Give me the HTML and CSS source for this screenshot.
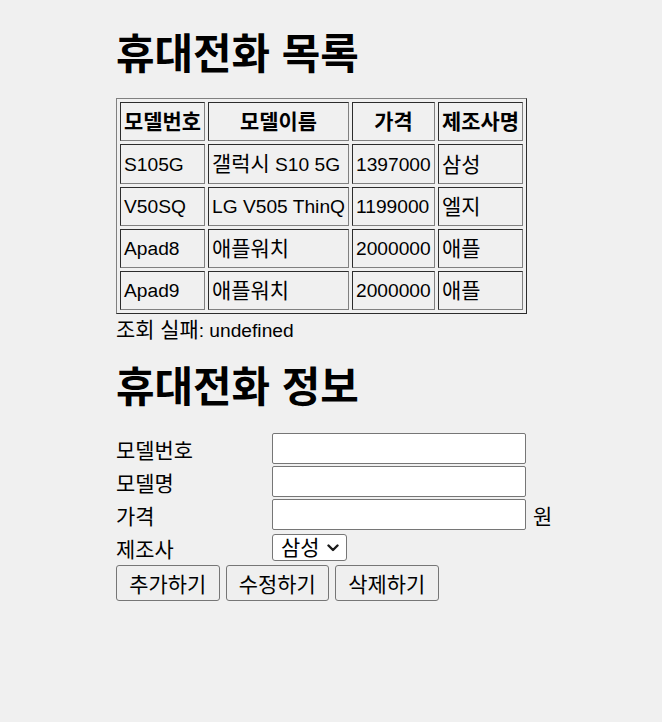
FILE: index.html
```html
<!DOCTYPE html>
<html lang="ko">
<head>
<meta charset="utf-8">
<title>휴대전화</title>
<link rel="stylesheet" href="styles.css">
</head>
<body>
<div class="page">
  <h1 class="title title-list">휴대전화 목록</h1>
  <table class="list">
    <thead>
      <tr>
        <th class="c1">모델번호</th>
        <th class="c2">모델이름</th>
        <th class="c3">가격</th>
        <th class="c4">제조사명</th>
      </tr>
    </thead>
    <tbody>
      <tr><td>S105G</td><td><span class="ko">갤럭시</span> S10 5G</td><td>1397000</td><td class="ko">삼성</td></tr>
      <tr><td>V50SQ</td><td>LG V505 ThinQ</td><td>1199000</td><td class="ko">엘지</td></tr>
      <tr><td>Apad8</td><td class="ko">애플워치</td><td>2000000</td><td class="ko">애플</td></tr>
      <tr><td>Apad9</td><td class="ko">애플워치</td><td>2000000</td><td class="ko">애플</td></tr>
    </tbody>
  </table>
  <div class="msg"><span class="ko">조회 실패</span>: undefined</div>
  <h1 class="title title-info">휴대전화 정보</h1>
  <form class="form">
    <div class="row"><label class="lbl">모델번호</label><input class="field" type="text"></div>
    <div class="row"><label class="lbl">모델명</label><input class="field" type="text"></div>
    <div class="row"><label class="lbl">가격</label><input class="field" type="text"><span class="unit">원</span></div>
    <div class="row row-select">
      <label class="lbl">제조사</label>
      <span class="sel-wrap">
        <select class="sel">
          <option>삼성</option>
          <option>엘지</option>
          <option>애플</option>
        </select>
        <svg class="chev" width="12" height="8" viewBox="0 0 12 8"><path d="M1.5 1.5 L6 6 L10.5 1.5" fill="none" stroke="#1a1a1a" stroke-width="2.4" stroke-linecap="round" stroke-linejoin="round"/></svg>
      </span>
    </div>
    <div class="buttons">
      <button type="button" class="btn">추가하기</button>
      <button type="button" class="btn">수정하기</button>
      <button type="button" class="btn">삭제하기</button>
    </div>
  </form>
</div>
</body>
</html>
```
FILE: styles.css
```css
html, body {
  margin: 0;
  padding: 0;
  background: #f0f0f0;
}
body {
  font-family: "Liberation Sans", "Noto Sans CJK KR", sans-serif;
  font-size: 19.2px;
  color: #000;
}
.ko {
  font-size: 20.9px;
}
.page {
  padding-left: 116px;
}
.title {
  font-size: 41.9px;
  font-weight: bold;
  line-height: 46px;
  margin: 0;
}
.title-list {
  padding-top: 32px;
}
.list {
  margin-top: 20px;
  border: 1px outset #808080;
  border-spacing: 3px;
}
.list th,
.list td {
  border: 1px inset #808080;
  padding: 6px 3px;
  line-height: 25px;
  height: 25px;
  white-space: nowrap;
}
.list th {
  font-size: 20.9px;
  font-weight: bold;
  text-align: center;
}
.list td {
  text-align: left;
}
.c1 { width: 77px; }
.c2 { width: 132px; }
.c3 { width: 75px; }
.c4 { width: 77px; }
.msg {
  margin-top: 5px;
  line-height: 22px;
  height: 22px;
}
.title-info {
  margin-top: 24px;
}
.form {
  margin-top: 22px;
  display: flex;
  flex-direction: column;
}
.row {
  display: flex;
  align-items: center;
  height: 31px;
}
.row + .row {
  margin-top: 2px;
}
.lbl {
  width: 156px;
  flex: none;
  font-size: 20.9px;
}
.field {
  box-sizing: border-box;
  width: 254px;
  height: 31px;
  border: 1px solid #767676;
  border-radius: 2px;
  background: #fff;
  padding: 1px 3px;
  font: inherit;
  margin: 0;
}
.unit {
  margin-left: 7px;
  font-size: 20.9px;
}
.row-select {
  height: 27px;
  margin-top: 4px !important;
}
.sel-wrap {
  position: relative;
  display: inline-block;
}
.sel {
  appearance: none;
  -webkit-appearance: none;
  box-sizing: border-box;
  width: 75px;
  height: 27px;
  border: 1px solid #767676;
  border-radius: 3px;
  background: #fff;
  font-family: inherit;
  font-size: 20.9px;
  line-height: 25px;
  padding: 0 0 0 8px;
  margin: 0;
  color: #000;
}
.chev {
  position: absolute;
  left: 55px;
  top: 10px;
  pointer-events: none;
}
.buttons {
  display: flex;
  gap: 6px;
  margin-top: 4px;
}
.btn {
  box-sizing: border-box;
  width: 103.5px;
  height: 36px;
  border: 1px solid #767676;
  border-radius: 3px;
  background: #efefef;
  font-family: inherit;
  font-size: 20.9px;
  color: #000;
  padding: 0;
  margin: 0;
}
```
